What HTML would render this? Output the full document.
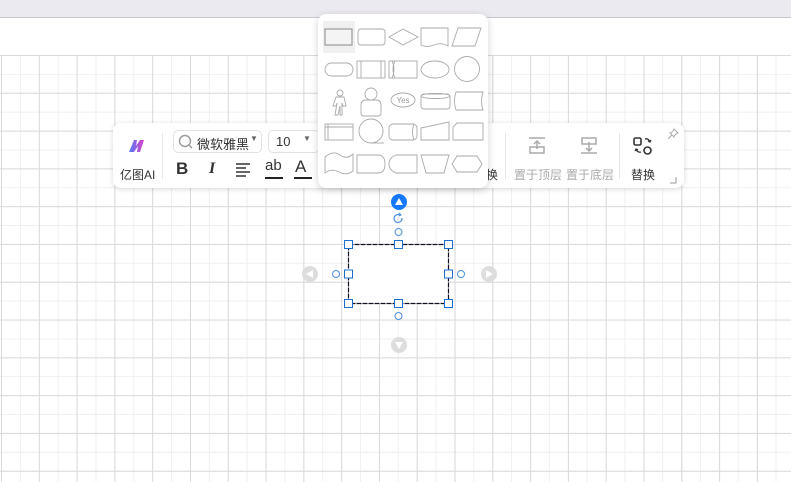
<!DOCTYPE html>
<html><head><meta charset="utf-8"><style>
*{margin:0;padding:0;box-sizing:border-box}
body{width:791px;height:482px;overflow:hidden;background:#fff;position:relative;font-family:"Liberation Sans","Noto Sans CJK SC",sans-serif}
.top{position:absolute;left:0;top:0;width:791px;height:18px;background:#ebeaf0;border-bottom:1px solid #c8c8cc}
.grid{position:absolute;left:0;top:55px;width:791px;height:427px;
background-image:
linear-gradient(to right,#dadada 1px,transparent 1px),
linear-gradient(to bottom,#dadada 1px,transparent 1px),
linear-gradient(to right,#f0f0f0 1px,transparent 1px),
linear-gradient(to bottom,#f0f0f0 1px,transparent 1px);
background-size:37.8px 37.8px,37.8px 37.8px,18.9px 18.9px,18.9px 18.9px;
background-position:1px 0,1px 0,1px 0,1px 0}
.tb{position:absolute;left:113px;top:123px;width:571px;height:65px;background:#fff;border-radius:8px;box-shadow:0 1px 6px rgba(0,0,0,.15)}
.pop{position:absolute;left:318px;top:14px;width:170px;height:174px;background:#fff;border-radius:8px;box-shadow:0 2px 8px rgba(0,0,0,.18)}
.t{position:absolute;font-size:12px;color:#333;white-space:nowrap}
.g{color:#aaa}
.div{position:absolute;width:1px;height:46px;top:133px;background:#e6e6e6}
.box{position:absolute;border:1px solid #e2e2e2;border-radius:5px;height:23px;top:130px}
</style></head><body>
<div class="top"></div>
<div class="grid"></div>

<div class="tb"></div>
<svg style="position:absolute;left:127px;top:137px" width="20" height="18" viewBox="0 0 20 18">
<defs><linearGradient id="lg" x1="0" x2="1"><stop offset="0" stop-color="#4f7bff"/><stop offset="1" stop-color="#e040c0"/></linearGradient></defs>
<path d="M2 15 L7 3 L10 3 L9 9 L13 3 L17 3 L13 15 L10 15 L11 9 L7 15 Z" fill="url(#lg)"/></svg>
<div class="t" style="left:120px;top:166px">亿图AI</div>
<div class="div" style="left:162px"></div>
<div class="box" style="left:173px;width:89px"></div>
<svg style="position:absolute;left:178px;top:134px" width="16" height="16"><circle cx="7" cy="7" r="5.5" fill="none" stroke="#999" stroke-width="1.4"/><path d="M11 11 L14 14" stroke="#999" stroke-width="1.4"/></svg>
<div class="t" style="left:197px;top:134px;font-size:13px">微软雅黑</div>
<div class="t" style="left:250px;top:134px;font-size:8px;color:#666">▼</div>
<div class="box" style="left:268px;width:52px"></div>
<div class="t" style="left:276px;top:134px;font-size:13px">10</div>
<div class="t" style="left:303px;top:134px;font-size:8px;color:#666">▼</div>
<div class="t" style="left:176px;top:159px;font-size:17px;font-weight:bold">B</div>
<div class="t" style="left:209px;top:160px;font-size:16px;font-style:italic;font-family:'Liberation Serif',serif;font-weight:bold">I</div>
<svg style="position:absolute;left:235px;top:162px" width="16" height="16"><path d="M1 2H15M1 6H11M1 10H15M1 14H11" stroke="#333" stroke-width="1.6"/></svg>
<div class="t" style="left:265px;top:157px;font-size:15px">ab</div>
<div style="position:absolute;left:265px;top:177px;width:18px;height:2px;background:#222"></div>
<div class="t" style="left:295px;top:157px;font-size:17px">A</div>
<div style="position:absolute;left:294px;top:177px;width:18px;height:2px;background:#222"></div>
<div class="t" style="left:486px;top:166px">换</div>
<div class="div" style="left:505px"></div>
<svg style="position:absolute;left:527px;top:137px" width="20" height="18"><path d="M2 1H18" stroke="#aaa" stroke-width="1.5"/><rect x="3" y="10" width="14" height="6" fill="none" stroke="#aaa" stroke-width="1.5"/><path d="M10 12V4M7 7L10 4L13 7" fill="none" stroke="#aaa" stroke-width="1.5"/></svg>
<div class="t g" style="left:514px;top:166px">置于顶层</div>
<svg style="position:absolute;left:579px;top:137px" width="20" height="18"><rect x="3" y="1" width="14" height="6" fill="none" stroke="#aaa" stroke-width="1.5"/><path d="M2 16H18" stroke="#aaa" stroke-width="1.5"/><path d="M10 5V14M7 11L10 14L13 11" fill="none" stroke="#aaa" stroke-width="1.5"/></svg>
<div class="t g" style="left:566px;top:166px">置于底层</div>
<div class="div" style="left:619px"></div>
<svg style="position:absolute;left:632px;top:136px" width="22" height="20"><rect x="2" y="2" width="7" height="7" rx="1.5" fill="none" stroke="#333" stroke-width="1.6"/><circle cx="15.5" cy="14.5" r="3.5" fill="none" stroke="#333" stroke-width="1.6"/><path d="M13 3a4 4 0 0 1 5 3M16 5l2 1 1-2M9 16a4 4 0 0 1-5-3M6 14l-2-1-1 2" fill="none" stroke="#333" stroke-width="1.3"/></svg>
<div class="t" style="left:631px;top:166px">替换</div>
<svg style="position:absolute;left:667px;top:128px" width="12" height="12"><path d="M7 1L11 5L9 6L7 8L7 9L3 5L4 5L6 3Z M5 7L1 11" fill="none" stroke="#aaa" stroke-width="1"/></svg>
<svg style="position:absolute;left:669px;top:176px" width="8" height="8"><path d="M1 7H7V1" fill="none" stroke="#999" stroke-width="1"/></svg>

<div class="pop"></div>
<svg style="position:absolute;left:318px;top:14px" width="170" height="174" viewBox="318 14 170 174" fill="none" stroke="#aaa" stroke-width="0.9">
<rect x="323" y="21" width="32" height="32" fill="#f0f0f0" stroke="none"/>
<rect x="325" y="29" width="27" height="16" fill="#f4f4f4" stroke="#999" stroke-width="1.2"/>
<rect x="358" y="29" width="27" height="16" rx="3"/>
<path d="M389 37L403 29L418 37L403 45Z"/>
<path d="M421 28H448V46Q441 42 434 45Q427 48 421 45Z"/>
<path d="M458 28H481L475 46H452Z"/>
<rect x="325" y="63" width="28" height="13" rx="6.5"/>
<rect x="357" y="61" width="28" height="17"/><path d="M361 61V78M381 61V78"/>
<rect x="389" y="61" width="28" height="17"/><path d="M392 61Q396 69 392 78M395 61Q391 69 395 78"/>
<ellipse cx="435" cy="69.5" rx="14" ry="8.5"/>
<circle cx="467" cy="69" r="12.5"/>
<circle cx="340" cy="93" r="3"/><path d="M336 97H344L346 106H343L342 103V115H340L340 106L338 115H335L337 103L336 106H333Z"/>
<circle cx="371" cy="94" r="6"/><path d="M361 113V105Q361 100 366 100H376Q381 100 381 105V113Q381 116 378 116H364Q361 116 361 113Z"/>
<ellipse cx="403" cy="100" rx="12" ry="7"/><text x="403" y="103" font-size="8" fill="#999" stroke="none" text-anchor="middle" font-family="Liberation Sans">Yes</text>
<rect x="421" y="94" width="29" height="15" rx="3"/><ellipse cx="435.5" cy="96" rx="14.5" ry="2.5"/>
<path d="M456 92H483Q480 101 483 110H456Q453 101 456 92Z"/>
<rect x="325" y="124" width="28" height="16"/><path d="M328 124V140M325 127H353"/>
<circle cx="371" cy="131" r="12"/><path d="M371 143H384"/>
<rect x="389" y="124" width="28" height="16" rx="4"/><path d="M414 124Q411 132 414 140"/>
<path d="M421 128L449 122V140H421Z"/>
<path d="M457 123H483V140H453V127Z"/>
<path d="M325 157Q333 150 340 155Q347 160 353 154V171Q346 176 339 172Q332 168 325 173Z"/>
<path d="M357 155H378Q385 155 385 164Q385 173 378 173H357Z"/>
<path d="M396 155H417V173H396Q389 170 389 164Q389 158 396 155Z"/>
<path d="M421 155H449L444 173H426Z"/>
<path d="M457 156H477L482 164L477 172H457L452 164Z"/>
</svg>

<svg style="position:absolute;left:295px;top:190px" width="210" height="165" viewBox="295 190 210 165">
<circle cx="399" cy="202" r="8" fill="#1677ff"/><path d="M395 205H403L399 198Z" fill="#fff"/>
<path d="M402 218a4 4 0 1 1-2-3" fill="none" stroke="#4a90e2" stroke-width="1.2"/><path d="M399 213l2 2-2 1" fill="none" stroke="#4a90e2" stroke-width="1"/>
<circle cx="398.5" cy="232" r="3.5" fill="#fff" stroke="#4a90e2"/>
<circle cx="398.5" cy="316" r="3.5" fill="#fff" stroke="#4a90e2"/>
<circle cx="336" cy="274" r="3.5" fill="#fff" stroke="#4a90e2"/>
<circle cx="461" cy="274" r="3.5" fill="#fff" stroke="#4a90e2"/>
<circle cx="310" cy="274" r="8" fill="#ddd"/><path d="M313 270V278L306 274Z" fill="#fff"/>
<circle cx="489" cy="274" r="8" fill="#ddd"/><path d="M486 270V278L493 274Z" fill="#fff"/>
<circle cx="399" cy="345" r="8" fill="#ddd"/><path d="M395 342H403L399 349Z" fill="#fff"/>
<rect x="348.5" y="244.5" width="100" height="59" fill="#fff" stroke="#112" stroke-width="1.2" stroke-dasharray="5 1"/>
<g fill="#fff" stroke="#1a6fd1" stroke-width="1">
<rect x="344.5" y="240.5" width="8" height="8"/><rect x="394.5" y="240.5" width="8" height="8"/><rect x="444.5" y="240.5" width="8" height="8"/>
<rect x="344.5" y="270" width="8" height="8"/><rect x="444.5" y="270" width="8" height="8"/>
<rect x="344.5" y="299.5" width="8" height="8"/><rect x="394.5" y="299.5" width="8" height="8"/><rect x="444.5" y="299.5" width="8" height="8"/>
</g>
</svg>
</body></html>
